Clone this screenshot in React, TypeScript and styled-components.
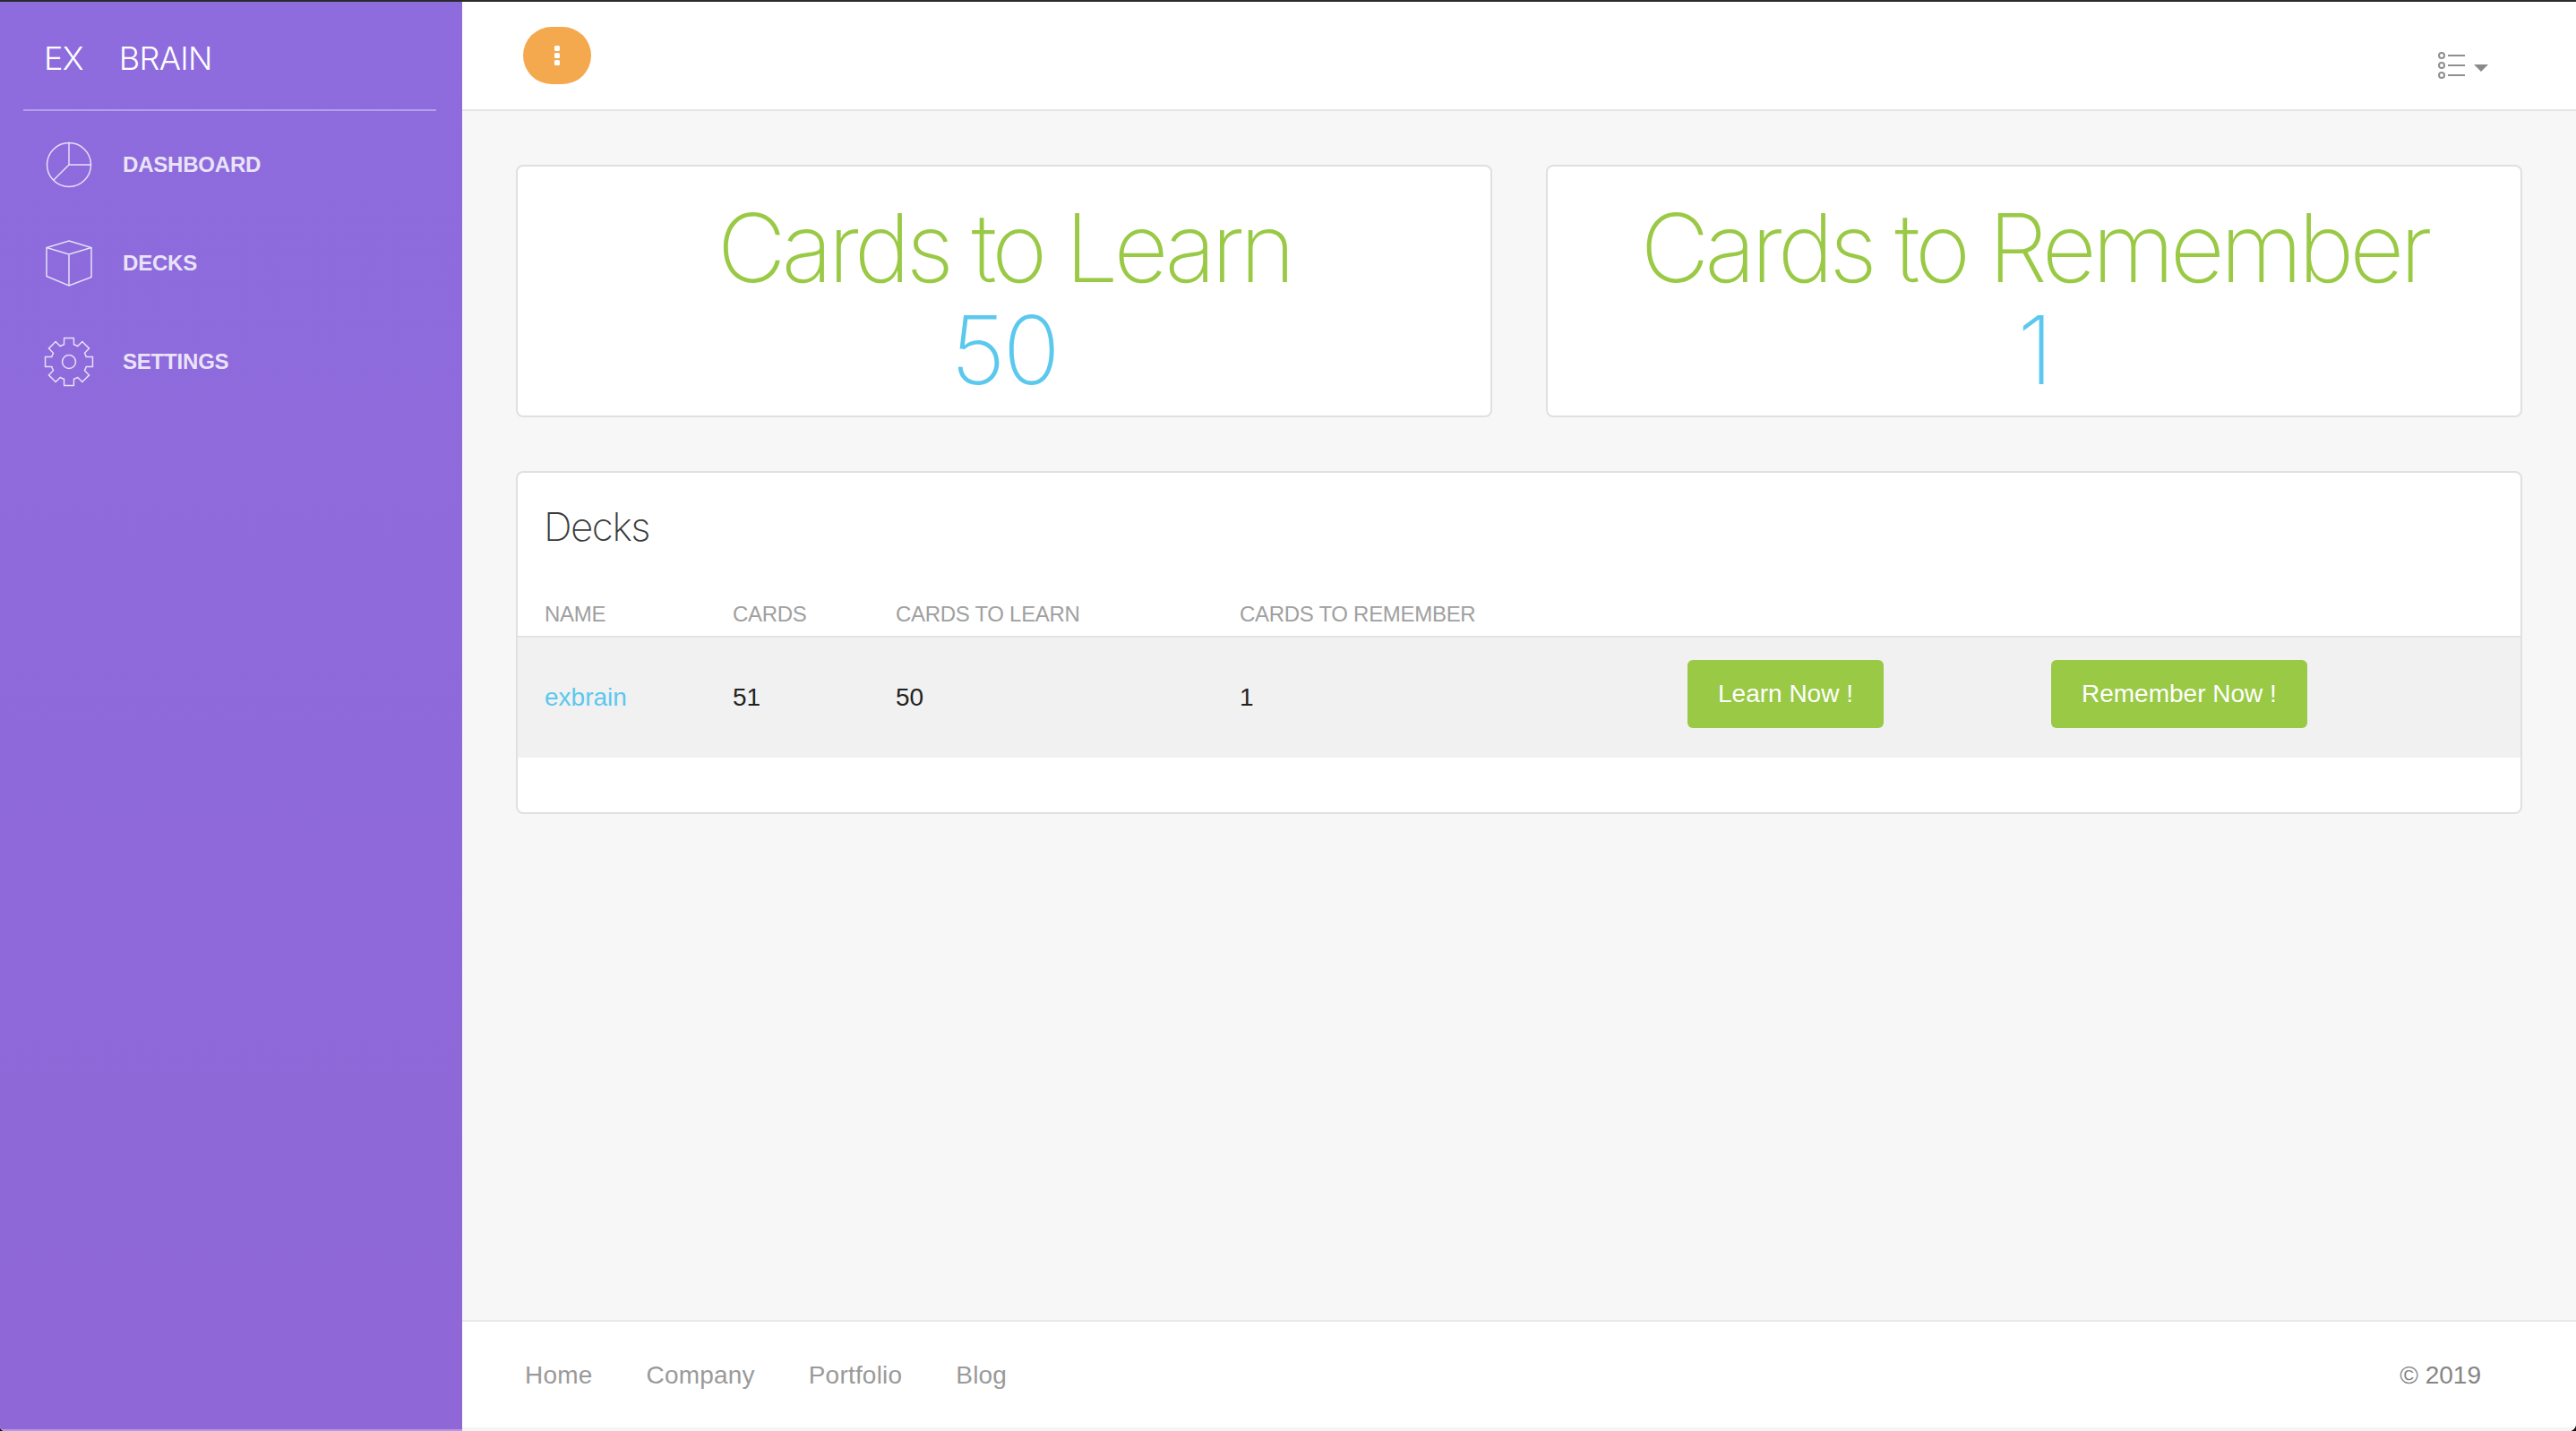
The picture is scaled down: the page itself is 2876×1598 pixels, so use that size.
import styled, { createGlobalStyle } from "styled-components";

const GlobalStyle = createGlobalStyle`
  html, body {
    margin: 0;
    padding: 0;
    background: #111;
  }
  body {
    font-family: "Liberation Sans", Arial, sans-serif;
  }
  * {
    box-sizing: border-box;
  }
`;

const Shell = styled.div`
  display: flex;
  width: 2876px;
  height: 1598px;
  overflow: hidden;
  border-top: 2px solid #2b2b2d;
  border-radius: 0 0 8px 5px;
  background: #f7f7f7;
`;

const Sidebar = styled.aside`
  flex: 0 0 516px;
  background: linear-gradient(180deg, #8e6cde 0%, #8f67d6 100%);
  border-bottom: 2px solid #b497e3;
  padding: 0 29px 0 26px;
`;

const Logo = styled.div`
  display: flex;
  gap: 40px;
  height: 122px;
  padding: 41px 0 0 23px;
  border-bottom: 2px solid rgba(255, 255, 255, 0.35);
  color: #fff;
  font-family: Inter, "Liberation Sans", sans-serif;
  font-size: 36px;
  font-weight: 300;
  line-height: 44px;
  letter-spacing: -0.7px;
`;

const NavList = styled.nav`
  display: flex;
  flex-direction: column;
  gap: 50px;
  padding: 30px 0 0 21px;
`;

const NavItem = styled.a`
  display: flex;
  align-items: center;
  gap: 30px;
  height: 60px;
  color: rgba(255, 255, 255, 0.84);
  font-size: 24px;
  font-weight: 700;
  letter-spacing: -0.2px;
  svg {
    flex: 0 0 auto;
    width: 60px;
    height: 60px;
    fill: none;
    stroke: rgba(255, 255, 255, 0.78);
    stroke-width: 1.5;
  }
`;

const Main = styled.div`
  flex: 1;
  display: flex;
  flex-direction: column;
  min-width: 0;
`;

const TopBar = styled.header`
  flex: 0 0 122px;
  display: flex;
  justify-content: space-between;
  padding: 28px 98px 0 68px;
  background: #fff;
  border-bottom: 2px solid #e5e5e5;
`;

const MenuButton = styled.button`
  display: flex;
  flex-direction: column;
  align-items: center;
  justify-content: center;
  gap: 2px;
  width: 76px;
  height: 64px;
  padding: 0;
  border: 0;
  border-radius: 32px;
  background: #f4a94f;
`;

const Dot = styled.span`
  width: 6px;
  height: 6px;
  border-radius: 1.5px;
  background: #fff;
`;

const ListToggle = styled.div`
  display: flex;
  align-items: center;
  gap: 9px;
  height: 30px;
  margin-top: 28px;
`;

const Caret = styled.span`
  width: 0;
  height: 0;
  margin-top: 6px;
  border-top: 8px solid #8a8a8a;
  border-left: 8px solid transparent;
  border-right: 8px solid transparent;
`;

const Content = styled.main`
  flex: 1;
  padding: 60px;
`;

const StatRow = styled.div`
  display: grid;
  grid-template-columns: 1fr 1fr;
  gap: 60px;
  margin-bottom: 60px;
`;

const Panel = styled.section`
  background: #fff;
  border: 2px solid #e0e0e0;
  border-radius: 8px;
`;

const StatCard = styled(Panel)`
  height: 282px;
  padding: 34px 0 0;
  text-align: center;
  font-family: Inter, "Liberation Sans", sans-serif;
  font-weight: 150;
`;

const StatTitle = styled.div`
  color: #99c945;
  font-size: 106px;
  line-height: 114px;
  letter-spacing: -5.1px;
`;

const StatValue = styled.div`
  color: #5bc8ee;
  font-size: 106px;
  line-height: 114px;
  letter-spacing: -3px;
`;

const DecksPanel = styled(Panel)`
  height: 383px;
`;

const PanelTitle = styled.h2`
  margin: 0;
  height: 134px;
  padding: 33px 0 0 29px;
  color: #3a3a3a;
  font-family: Inter, "Liberation Sans", sans-serif;
  font-size: 44px;
  font-weight: 150;
  line-height: 54px;
  letter-spacing: -1.5px;
`;

const DeckGrid = styled.div`
  display: grid;
  grid-template-columns: 210px 182px 384px 500px 406px 1fr;
  align-items: center;
  padding-left: 30px;
`;

const HeadRow = styled(DeckGrid)`
  height: 50px;
  border-bottom: 2px solid #e3e3e3;
  color: #9f9f9f;
  font-size: 24px;
  letter-spacing: -0.3px;
`;

const BodyRow = styled(DeckGrid)`
  height: 134px;
  background: #f1f1f1;
  color: #222;
  font-size: 28px;
`;

const DeckLink = styled.a`
  color: #5bc8ee;
`;

const ActionButton = styled.button`
  justify-self: start;
  height: 76px;
  margin-top: -8px;
  padding: 0 34px;
  border: 0;
  border-radius: 6px;
  background: #99c945;
  color: #fff;
  font-family: inherit;
  font-size: 28px;
`;

const Footer = styled.footer`
  flex: 0 0 124px;
  display: flex;
  justify-content: space-between;
  align-items: center;
  padding: 2px 106px 0 70px;
  background: #fff;
  border-top: 2px solid #e9e9e9;
  border-bottom: 4px solid #f5f5f5;
  font-size: 28px;
`;

const FooterLinks = styled.div`
  display: flex;
  gap: 60px;
  color: #9a9a9a;
  letter-spacing: 0.2px;
`;

const Copyright = styled.div`
  color: #858585;
`;

function PieIcon() {
  return (
    <svg viewBox="0 0 60 60">
      <circle cx="30" cy="30" r="24.5" />
      <path d="M30 5.5V30H54.5M30 30L12.7 47.3" />
    </svg>
  );
}

function CubeIcon() {
  return (
    <svg viewBox="0 0 60 60">
      <path d="M30 5L55 12.5V45.5L30 55L5 44.5V12.5ZM5 12.5L30 20L55 12.5M30 20V55" />
    </svg>
  );
}

// outline of an 8-tooth gear, flat tips and shallow arcs between the teeth
function gearPath(outer: number, root: number, tipHalf: number) {
  const at = (r: number, a: number) =>
    `${(30 + r * Math.cos(a)).toFixed(2)} ${(30 + r * Math.sin(a)).toFixed(2)}`;
  let d = "";
  for (let i = 0; i < 8; i++) {
    const mid = (i * Math.PI) / 4 - Math.PI / 2;
    const tip = Math.atan(tipHalf / outer);
    const base = Math.asin(tipHalf / root);
    d += `${i === 0 ? "M" : "A" + root + " " + root + " 0 0 1"}${at(root, mid - base)}`;
    d += `L${at(outer, mid - tip)}L${at(outer, mid + tip)}L${at(root, mid + base)}`;
  }
  const first = -Math.PI / 2 - Math.asin(tipHalf / root);
  return `${d}A${root} ${root} 0 0 1 ${at(root, first)}Z`;
}

function GearIcon() {
  return (
    <svg viewBox="0 0 60 60">
      <path d={gearPath(27, 20, 5.5)} />
      <circle cx="30" cy="30" r="7.5" />
    </svg>
  );
}

function ListIcon() {
  return (
    <svg width="32" height="30" viewBox="0 0 32 30" fill="none" stroke="#8f8f8f" strokeWidth="2">
      <circle cx="5" cy="4" r="3" />
      <circle cx="5" cy="15" r="3" />
      <circle cx="5" cy="26" r="3" />
      <path d="M12 4H31M12 15H31M12 26H31" />
    </svg>
  );
}

export default function App() {
  return (
    <>
      <GlobalStyle />
      <Shell>
        <Sidebar>
          <Logo>
            <span>EX</span>
            <span>BRAIN</span>
          </Logo>
          <NavList>
            <NavItem>
              <PieIcon />
              DASHBOARD
            </NavItem>
            <NavItem>
              <CubeIcon />
              DECKS
            </NavItem>
            <NavItem>
              <GearIcon />
              SETTINGS
            </NavItem>
          </NavList>
        </Sidebar>
        <Main>
          <TopBar>
            <MenuButton>
              <Dot />
              <Dot />
              <Dot />
            </MenuButton>
            <ListToggle>
              <ListIcon />
              <Caret />
            </ListToggle>
          </TopBar>
          <Content>
            <StatRow>
              <StatCard>
                <StatTitle>Cards to Learn</StatTitle>
                <StatValue>50</StatValue>
              </StatCard>
              <StatCard>
                <StatTitle>Cards to Remember</StatTitle>
                <StatValue>1</StatValue>
              </StatCard>
            </StatRow>
            <DecksPanel>
              <PanelTitle>Decks</PanelTitle>
              <HeadRow>
                <span>NAME</span>
                <span>CARDS</span>
                <span>CARDS TO LEARN</span>
                <span>CARDS TO REMEMBER</span>
              </HeadRow>
              <BodyRow>
                <DeckLink>exbrain</DeckLink>
                <span>51</span>
                <span>50</span>
                <span>1</span>
                <ActionButton>Learn Now !</ActionButton>
                <ActionButton>Remember Now !</ActionButton>
              </BodyRow>
            </DecksPanel>
          </Content>
          <Footer>
            <FooterLinks>
              <span>Home</span>
              <span>Company</span>
              <span>Portfolio</span>
              <span>Blog</span>
            </FooterLinks>
            <Copyright>© 2019</Copyright>
          </Footer>
        </Main>
      </Shell>
    </>
  );
}
